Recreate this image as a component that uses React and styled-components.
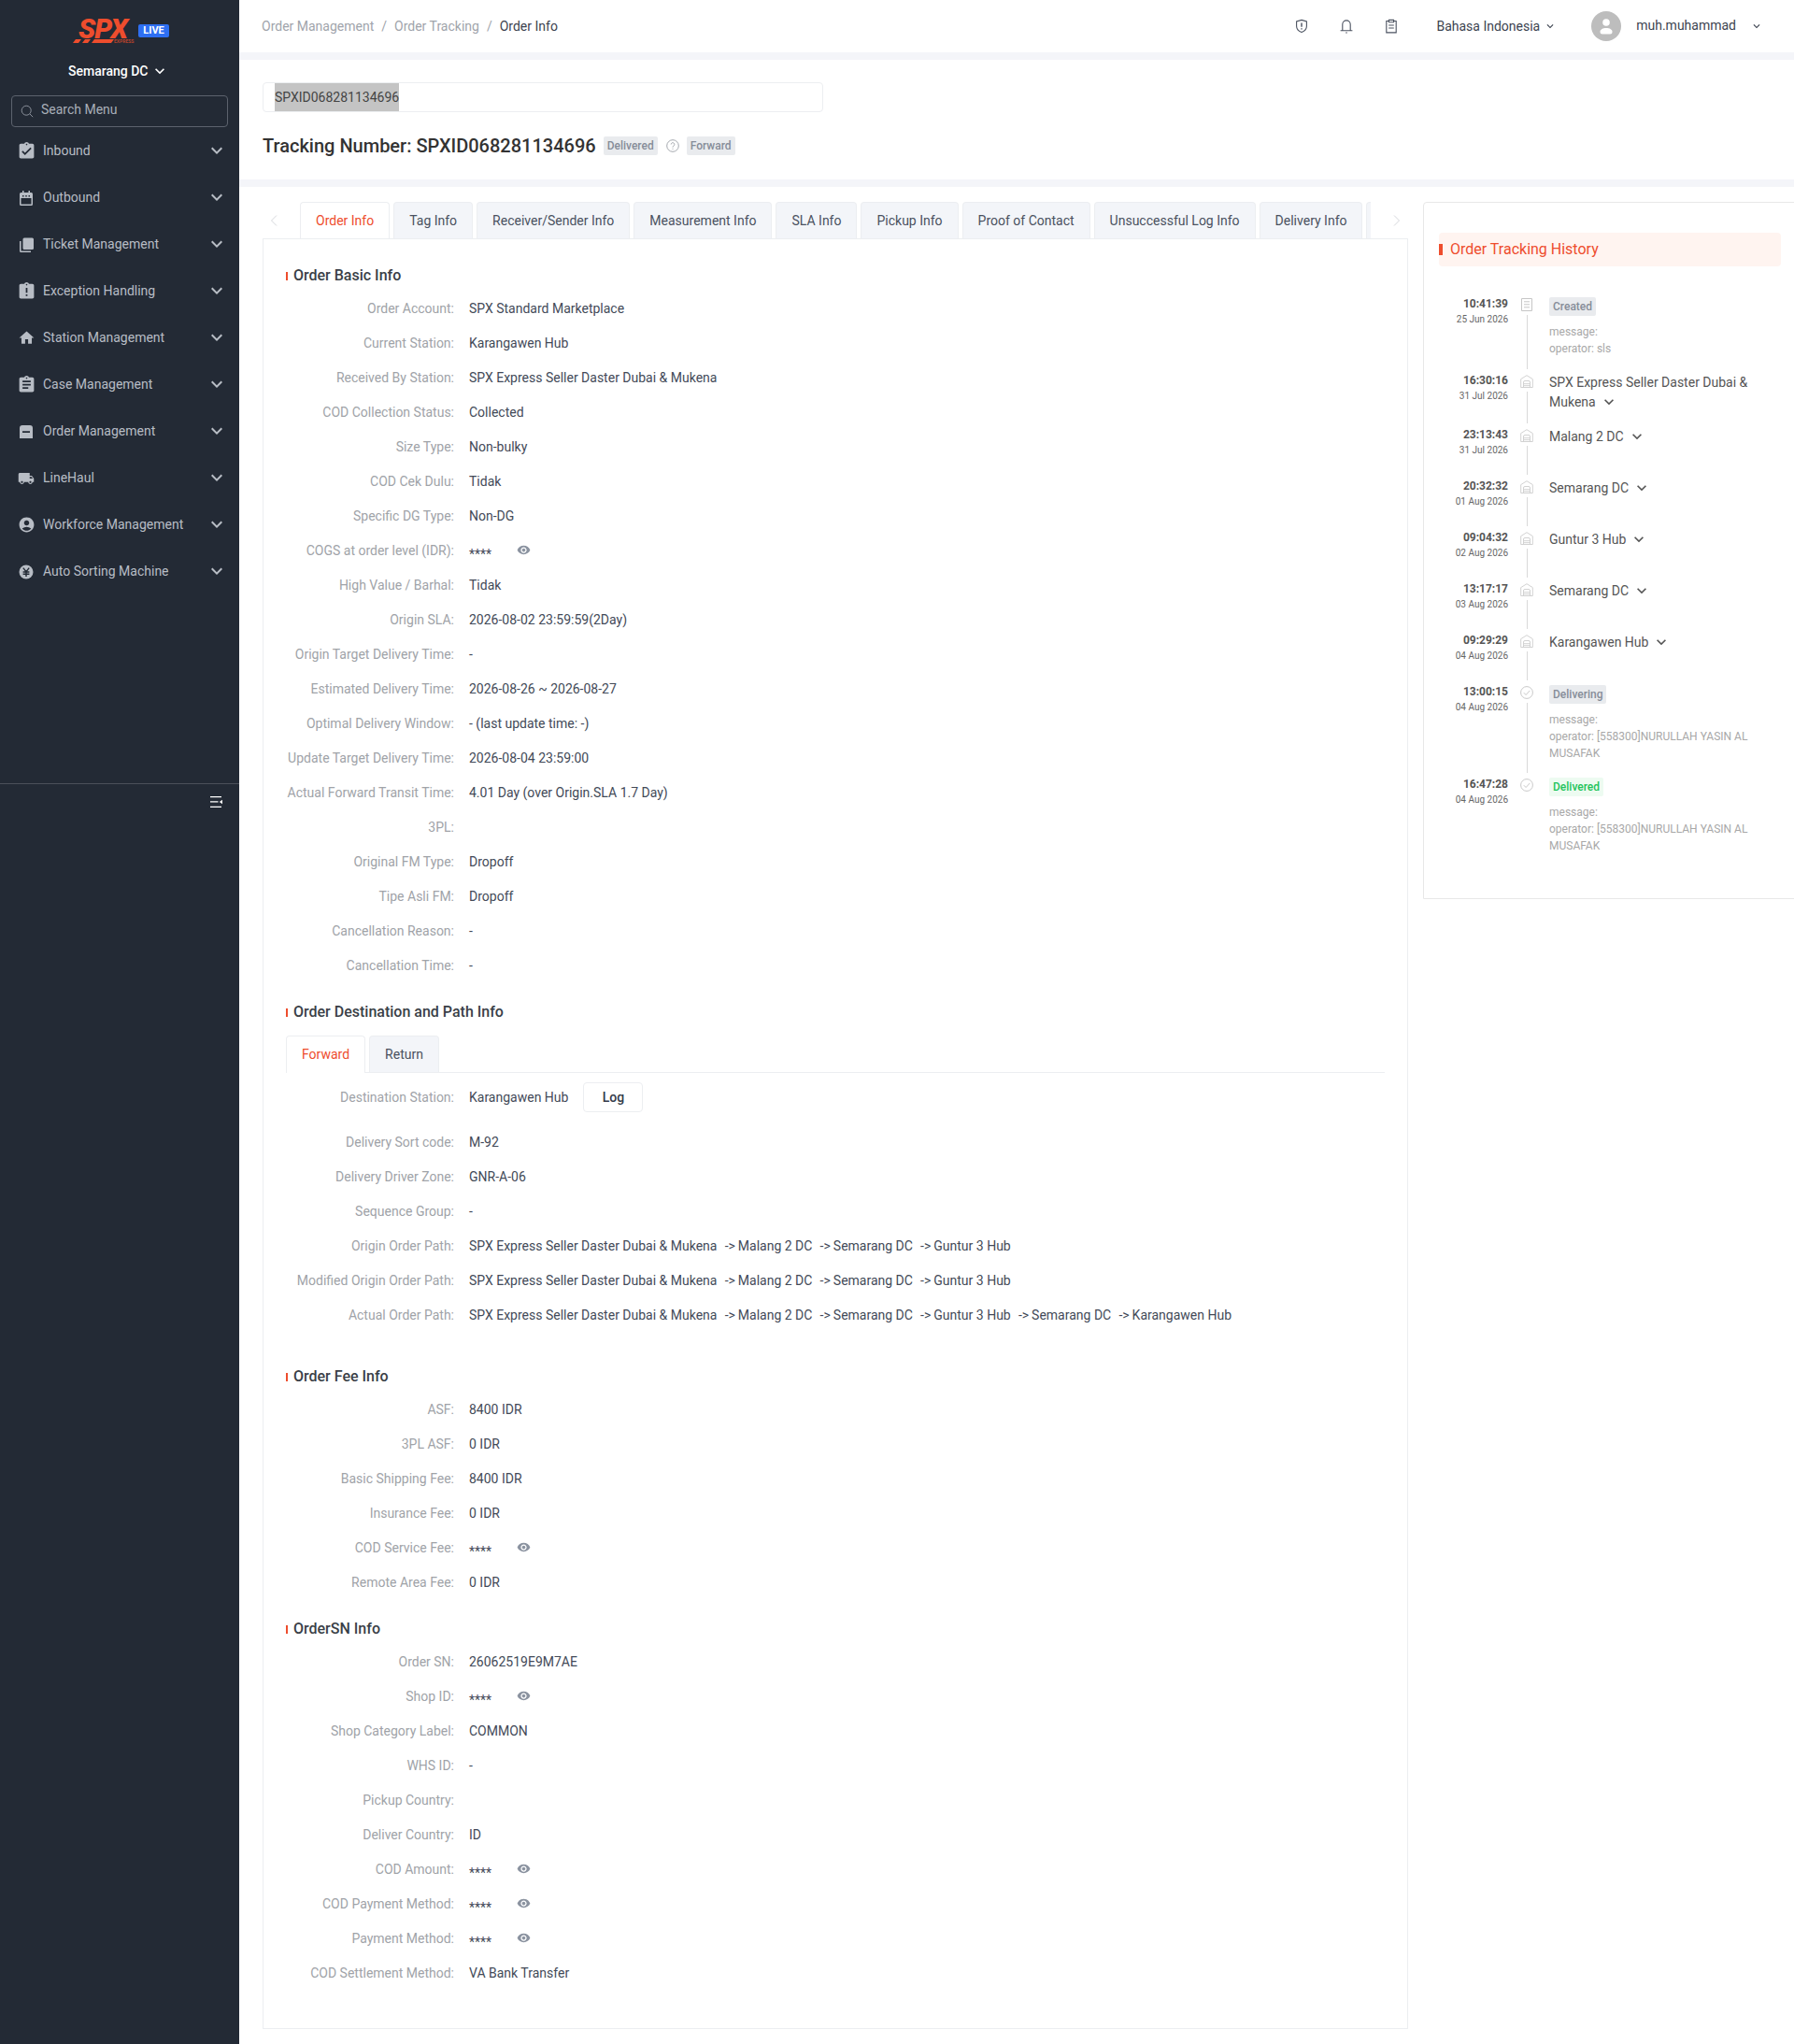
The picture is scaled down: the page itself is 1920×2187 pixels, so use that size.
import React from 'react';
import styled, { createGlobalStyle } from 'styled-components';
import {
  MdAssignmentTurnedIn,
  MdAssignmentLate,
  MdHome,
  MdAssignment,
  MdLocalShipping,
  MdAccountCircle,
  MdVisibility,
  MdKeyboardArrowDown,
} from 'react-icons/md';

const GlobalStyle = createGlobalStyle`
  html, body {
    margin: 0;
    padding: 0;
    background: #fff;
    font-family: Roboto, "Liberation Sans", sans-serif;
    overflow: hidden;
  }
  * { box-sizing: border-box; }
`;

const Shell = styled.div`
  display: flex;
  width: 1920px;
  height: 2187px;
  overflow: hidden;
`;

/* ---------- sidebar ---------- */
const Sidebar = styled.aside`
  width: 256px;
  flex-shrink: 0;
  background: #232a35;
  display: flex;
  flex-direction: column;
`;
const LogoRow = styled.div`
  height: 62px;
  padding: 18px 0 0 78px;
  display: flex;
  align-items: flex-start;
  gap: 2px;
  svg { overflow: visible; }
`;
const LiveBadge = styled.span`
  margin-top: 8px;
  width: 33px;
  height: 14px;
  border-radius: 2px;
  background: #2e6ff2;
  color: #fff;
  font-size: 11px;
  font-weight: 700;
  line-height: 14px;
  text-align: center;
`;
const StationPicker = styled.div`
  height: 28px;
  margin-bottom: 12px;
  padding-left: 73px;
  display: flex;
  align-items: center;
  gap: 3px;
  color: #fff;
  font-size: 14px;
  font-weight: 500;
  svg { color: #b7bcc4; }
`;
const SearchBox = styled.div`
  margin: 0 12px;
  height: 34px;
  border: 1px solid #5c626d;
  border-radius: 4px;
  padding: 0 0 5px 9px;
  display: flex;
  align-items: center;
  gap: 8px;
  color: #a9afb9;
  font-size: 14px;
  flex-shrink: 0;
  svg { margin-top: 5px; }
`;
const Menu = styled.nav`
  height: 702px;
`;
const MenuRow = styled.div`
  height: 50px;
  padding: 0 12px 0 14px;
  display: flex;
  align-items: center;
  color: #b8bdc5;
  font-size: 14px;
`;
const MenuIcon = styled.span`
  width: 28px;
  height: 24px;
  margin-top: 1px;
  flex-shrink: 0;
  display: flex;
  align-items: center;
  justify-content: center;
`;
const MenuLabel = styled.span`
  flex: 1;
  margin-left: 4px;
`;
const SideFooter = styled.div`
  border-top: 1px solid #4b505a;
  height: 38px;
  padding: 13px 18px 0 0;
  display: flex;
  justify-content: flex-end;
`;

/* ---------- main ---------- */
const Main = styled.main`
  flex: 1;
  min-width: 0;
  overflow: hidden;
  display: flex;
  flex-direction: column;
`;
const TopBar = styled.header`
  height: 56px;
  flex-shrink: 0;
  padding-left: 24px;
  display: flex;
  align-items: center;
  font-size: 14px;
`;
const Crumbs = styled.div`
  flex: 1;
  display: flex;
  gap: 8px;
  color: #a0a4ab;
`;
const CrumbNow = styled.span`
  color: #3c4350;
`;
const IconSlot = styled.span`
  width: 16px;
  height: 16px;
  display: flex;
  margin-right: ${(p) => p.$gap}px;
  color: #4b5260;
`;
const Lang = styled.div`
  display: flex;
  align-items: center;
  gap: 4px;
  color: #3c4350;
  margin-right: 37px;
`;
const Avatar = styled.span`
  width: 32px;
  height: 32px;
  border-radius: 50%;
  background: #bdbdbd;
  margin-right: 16px;
  display: flex;
  align-items: center;
  justify-content: center;
`;
const UserName = styled.span`
  color: #3c4350;
  margin-top: -2px;
  margin-right: 15px;
`;
const UserCaret = styled.span`
  display: flex;
  margin-right: 33px;
`;
const Strip = styled.div`
  height: 8px;
  flex-shrink: 0;
  background: #f4f5f9;
`;
const SearchSection = styled.section`
  height: 128px;
  flex-shrink: 0;
  padding: 24px 25px 0;
`;
const TrackingInput = styled.div`
  width: 600px;
  height: 32px;
  border: 1px solid #eceef1;
  border-radius: 4px;
  padding: 0 12px;
  display: flex;
  align-items: center;
  font-size: 14px;
  color: #444;
`;
const Selected = styled.span`
  background: #c4c4c4;
  line-height: 30px;
`;
const TitleRow = styled.div`
  margin-top: 24px;
  height: 24px;
  display: flex;
  align-items: center;
`;
const Title = styled.h1`
  margin: 0 8px 0 0;
  font-size: 20px;
  line-height: 24px;
  font-weight: 500;
  color: #333;
`;
const Badge = styled.span`
  height: 20px;
  padding: 0 4px;
  border-radius: 2px;
  display: inline-flex;
  align-items: center;
  font-size: 12px;
  font-weight: 500;
  background: ${(p) => (p.$done ? '#edfbf1' : '#e9ebee')};
  color: ${(p) => (p.$done ? '#1fc45c' : '#868d99')};
`;
const HelpIcon = styled.span`
  display: flex;
  margin: 0 8px 0 9px;
`;
const Content = styled.div`
  flex: 1;
  padding: 16px 0 0 25px;
  display: flex;
  gap: 16px;
  align-items: flex-start;
`;
const LeftColumn = styled.div`
  width: 1226px;
  flex-shrink: 0;
`;
const TabNav = styled.div`
  height: 39px;
  display: flex;
  align-items: stretch;
  position: relative;
`;
const TabArrow = styled.span`
  width: 40px;
  padding: 0 8px;
  flex-shrink: 0;
  display: flex;
  align-items: center;
  justify-content: ${(p) => (p.$end ? 'flex-end' : 'flex-start')};
  color: #d5d7db;
`;
const TabScroller = styled.div`
  flex: 1;
  min-width: 0;
  display: flex;
  gap: 4px;
  overflow: hidden;
`;
const Tab = styled.div`
  flex-shrink: 0;
  height: ${(p) => (p.$active ? '40px' : '39px')};
  min-width: 32px;
  padding: 0 16px ${(p) => (p.$active ? '1px' : '0')};
  display: flex;
  align-items: center;
  font-size: 14px;
  border: 1px solid #eceef1;
  border-bottom: 0;
  border-radius: 4px 4px 0 0;
  position: relative;
  z-index: ${(p) => (p.$active ? 1 : 0)};
  background: ${(p) => (p.$active ? '#fff' : '#f3f5f9')};
  color: ${(p) => (p.$active ? '#ee4d2d' : '#4a5160')};
`;
const Panel = styled.div`
  height: 1916px;
  border: 1px solid #eceef1;
  padding: 28px 24px 0;
`;
const SectionTitle = styled.h2`
  margin: ${(p) => p.$top || 0}px 0 14px;
  height: 22px;
  display: flex;
  align-items: center;
  gap: 6px;
  font-size: 16px;
  line-height: 22px;
  font-weight: 500;
  color: #3a3f47;
  &::before {
    content: '';
    width: 2px;
    height: 9px;
    background: #ee4d2d;
  }
`;
const Row = styled.div`
  display: flex;
  height: 37px;
  align-items: flex-start;
  font-size: 14px;
  line-height: 21px;
`;
const Label = styled.span`
  width: 180px;
  flex-shrink: 0;
  text-align: right;
  color: #a0a3a8;
  white-space: nowrap;
`;
const Value = styled.span`
  margin-left: 16px;
  color: #434a58;
  white-space: pre;
`;
const MaskValue = styled(Value)`
  margin-top: 4px;
`;
const Hop = styled.span`
  display: inline-block;
  width: 22.4px;
  padding-right: 3px;
  text-align: right;
`;
const EyeWrap = styled.span`
  display: flex;
  margin-left: 27px;
  margin-top: 2px;
  color: #8b93a0;
`;
const SubTabs = styled.div`
  height: 40px;
  display: flex;
  gap: 4px;
  border-bottom: 1px solid #eceef1;
  margin-bottom: 10px;
  width: 1176px;
`;
const LogRow = styled(Row)`
  height: 32px;
  margin-bottom: 22px;
  align-items: center;
`;
const LogButton = styled.span`
  margin-left: 16px;
  width: 64px;
  height: 32px;
  border: 1px solid #eceef1;
  border-radius: 4px;
  display: flex;
  align-items: center;
  justify-content: center;
  color: #333a49;
  font-weight: 500;
`;

/* ---------- tracking history ---------- */
const HistoryCard = styled.aside`
  width: 420px;
  flex-shrink: 0;
  height: 746px;
  border: 1px solid #e8e8e8;
  border-radius: 4px 0 0 0;
  padding: 32px 0 0 16px;
`;
const HistoryHead = styled.div`
  width: 366px;
  height: 36px;
  padding-bottom: 2px;
  border-radius: 4px;
  background: #fff4f0;
  display: flex;
  align-items: center;
  gap: 8px;
  color: #ee4d2d;
  font-size: 16px;
  margin-bottom: 33px;
  &::before {
    content: '';
    width: 4px;
    height: 12px;
    margin-top: 2px;
    background: #ee4d2d;
  }
`;
const Step = styled.div`
  display: flex;
  height: ${(p) => p.$h}px;
  width: 366px;
`;
const StepTime = styled.div`
  width: 74px;
  flex-shrink: 0;
  text-align: right;
`;
const Clock = styled.div`
  font-size: 12px;
  font-weight: 700;
  line-height: 14px;
  color: #555;
`;
const DateText = styled.div`
  margin-top: 3px;
  font-size: 10px;
  line-height: 14px;
  color: #666;
  white-space: nowrap;
`;
const Rail = styled.div`
  width: 40px;
  flex-shrink: 0;
  display: flex;
  flex-direction: column;
  align-items: center;
  padding: 1px 0 5px;
  svg { flex-shrink: 0; }
`;
const RailLine = styled.span`
  flex: 1;
  width: 1px;
  margin-top: 4px;
  background: #d9d9d9;
`;
const StepBody = styled.div`
  flex: 1;
  min-width: 0;
  margin-top: -1px;
  padding: 0 16px 0 4px;
`;
const StationName = styled.div`
  font-size: 14px;
  line-height: 21px;
  color: #555;
  svg { vertical-align: -5px; margin-left: 4px; color: #3c4350; }
`;
const StepNote = styled.div`
  margin-top: 8px;
  font-size: 12px;
  line-height: 18px;
  color: #a8a8a8;
`;

const Chevron = ({ size = 18, color = 'currentColor' }) => <MdKeyboardArrowDown size={size} color={color} />;

const CalendarIcon = () => (
  <svg width="16" height="16" viewBox="0 0 16 16" fill="#b8bdc5" fillRule="evenodd">
    <path d="M4 0h1.500v2h5V0H12v2h1.500A1.500 1.500 0 0 1 15 3.500v11a1.500 1.500 0 0 1-1.500 1.500h-11A1.500 1.500 0 0 1 1 14.500v-11A1.500 1.500 0 0 1 2.500 2H4zM2.500 8v6.500h11V8zM4 5v1.500h1.500V5zM7.250 5v1.500h1.500V5zM10.500 5v1.500H12V5z" />
  </svg>
);
const StackIcon = () => (
  <svg width="16" height="16" viewBox="0 0 16 16" fill="#b8bdc5">
    <path d="M6 .5h8.500A1.500 1.500 0 0 1 16 2v9.500a1.500 1.500 0 0 1-1.500 1.500H6a1.500 1.500 0 0 1-1.500-1.500V2A1.500 1.500 0 0 1 6 .5z" />
    <path d="M1 4h1.500v10.500H13V16H2.500A1.500 1.500 0 0 1 1 14.500z" />
  </svg>
);
const OrderIcon = () => (
  <svg width="16" height="16" viewBox="0 0 16 16" fill="#b8bdc5" fillRule="evenodd">
    <path d="M4 1h8a3 3 0 0 1 3 3v11H1V4a3 3 0 0 1 3-3zM4 7.200V9h8V7.200z" />
  </svg>
);
const YenIcon = () => (
  <svg width="16" height="16" viewBox="0 0 16 16">
    <circle cx="8" cy="8" r="7.500" fill="#b8bdc5" />
    <path d="M4.800 3.600 8 7.600l3.200-4M4.600 8h6.800M4.600 10.200h6.800M8 7.600V13" stroke="#232a35" strokeWidth="1.400" fill="none" />
  </svg>
);
const CollapseIcon = () => (
  <svg width="13" height="12" viewBox="0 0 13 12" fill="#fff">
    <path d="M0 0h12v1.300H0zM0 5.300h8.500v1.300H0zM0 10.700h12V12H0zM13 3.800v4.400L9.800 6z" />
  </svg>
);
const SearchIcon = () => (
  <svg width="14" height="14" viewBox="0 0 14 14" fill="none" stroke="#8a909a" strokeWidth="1">
    <circle cx="6.200" cy="6.200" r="5" />
    <path d="m10 10 3.200 3.200" />
  </svg>
);
const ShieldIcon = () => (
  <svg width="16" height="16" viewBox="0 0 16 16" fill="none" stroke="currentColor" strokeWidth="1.100">
    <path d="M8 1.400 13.400 3v5c0 3.200-2.400 5.400-5.400 6.600C5 13.400 2.600 11.200 2.600 8V3z" />
    <path d="M8 4.600v4.200M8 10.200v1.200" strokeWidth="1.400" />
  </svg>
);
const BellIcon = () => (
  <svg width="16" height="16" viewBox="0 0 16 16" fill="none" stroke="currentColor" strokeWidth="1.100">
    <path d="M3.800 12.800V6.100a4.200 4.200 0 0 1 8.400 0v6.700M1.600 12.800h12.800" />
    <path d="M7.200 15h1.600" strokeWidth="1.200" />
  </svg>
);
const ClipIcon = () => (
  <svg width="16" height="16" viewBox="0 0 16 16" fill="none" stroke="currentColor" strokeWidth="1.100">
    <path d="M5.400 2.500H2.800v12.400h10.400V2.500h-2.600" />
    <path d="M5.400 1.400h5.200v2.400H5.400zM5.200 7h5.600M5.200 10h5.600" />
  </svg>
);
const PersonIcon = () => (
  <svg width="14" height="18" viewBox="0 0 14 18" fill="#fff">
    <circle cx="7" cy="5" r="3.800" />
    <path d="M3 17.500a2.500 2.500 0 0 1-2.500-2.500c0-2.500 3-4 6.500-4s6.500 1.500 6.500 4a2.500 2.500 0 0 1-2.500 2.500z" />
  </svg>
);
const HelpGlyph = () => (
  <svg width="14" height="14" viewBox="0 0 14 14" fill="none" stroke="#9b9fa6" strokeWidth="0.900">
    <circle cx="7" cy="7" r="6.300" />
    <path d="M5.200 5.500a1.800 1.800 0 1 1 2.800 1.500c-.7.400-1 .8-1 1.600M7 9.800v1" />
  </svg>
);
const ArrowLeft = () => (
  <svg width="8" height="12" viewBox="0 0 8 12" fill="none" stroke="currentColor"><path d="M7 .5 1.500 6 7 11.500" /></svg>
);
const ArrowRight = () => (
  <svg width="8" height="12" viewBox="0 0 8 12" fill="none" stroke="currentColor"><path d="M1 .5 6.500 6 1 11.500" /></svg>
);
const DocStep = () => (
  <svg width="14" height="14" viewBox="0 0 14 14" fill="none" stroke="#c6c6c6" strokeWidth="1">
    <path d="M1.500.5h11v13h-11zM4 3.800h6M4 6.800h6M4 9.800h6" />
  </svg>
);
const HubStep = () => (
  <svg width="14" height="14" viewBox="0 0 14 14" fill="none" stroke="#d2d2d2" strokeWidth="1">
    <path d="M.7 13.500V4.600L7 .7l6.300 3.900v8.900z" />
    <path d="M3.500 13.500V8A1.500 1.500 0 0 1 5 6.500h4A1.500 1.500 0 0 1 10.500 8v5.500M3.500 9.700h7M3.500 11.700h7" />
  </svg>
);
const CheckStep = () => (
  <svg width="14" height="14" viewBox="0 0 14 14" fill="none" stroke="#c9c9c9" strokeWidth="1">
    <circle cx="7" cy="7" r="6.400" />
    <path d="m3.800 7.200 2.300 2.300 4.200-4.600" />
  </svg>
);

const MENU = [
  ['Inbound', <MdAssignmentTurnedIn size={21} />],
  ['Outbound', <CalendarIcon />],
  ['Ticket Management', <StackIcon />],
  ['Exception Handling', <MdAssignmentLate size={21} />],
  ['Station Management', <MdHome size={19} />],
  ['Case Management', <MdAssignment size={21} />],
  ['Order Management', <OrderIcon />],
  ['LineHaul', <MdLocalShipping size={18} />],
  ['Workforce Management', <MdAccountCircle size={19} />],
  ['Auto Sorting Machine', <YenIcon />],
];

const TABS = [
  'Order Info', 'Tag Info', 'Receiver/Sender Info', 'Measurement Info', 'SLA Info',
  'Pickup Info', 'Proof of Contact', 'Unsuccessful Log Info', 'Delivery Info', '',
];

const MASK = '****';

const BASIC = [
  ['Order Account', 'SPX Standard Marketplace'],
  ['Current Station', 'Karangawen Hub'],
  ['Received By Station', 'SPX Express Seller Daster Dubai & Mukena'],
  ['COD Collection Status', 'Collected'],
  ['Size Type', 'Non-bulky'],
  ['COD Cek Dulu', 'Tidak'],
  ['Specific DG Type', 'Non-DG'],
  ['COGS at order level (IDR)', MASK],
  ['High Value / Barhal', 'Tidak'],
  ['Origin SLA', '2026-08-02 23:59:59(2Day)'],
  ['Origin Target Delivery Time', '-'],
  ['Estimated Delivery Time', '2026-08-26 ~ 2026-08-27'],
  ['Optimal Delivery Window', '- (last update time: -)'],
  ['Update Target Delivery Time', '2026-08-04 23:59:00'],
  ['Actual Forward Transit Time', '4.01 Day (over Origin.SLA 1.7 Day)'],
  ['3PL', ''],
  ['Original FM Type', 'Dropoff'],
  ['Tipe Asli FM', 'Dropoff'],
  ['Cancellation Reason', '-'],
  ['Cancellation Time', '-'],
];

const HOPS = ['SPX Express Seller Daster Dubai & Mukena', 'Malang 2 DC', 'Semarang DC', 'Guntur 3 Hub'];

const DESTINATION = [
  ['Delivery Sort code', 'M-92'],
  ['Delivery Driver Zone', 'GNR-A-06'],
  ['Sequence Group', '-'],
  ['Origin Order Path', HOPS],
  ['Modified Origin Order Path', HOPS],
  ['Actual Order Path', [...HOPS, 'Semarang DC', 'Karangawen Hub']],
];

const FEES = [
  ['ASF', '8400 IDR'],
  ['3PL ASF', '0 IDR'],
  ['Basic Shipping Fee', '8400 IDR'],
  ['Insurance Fee', '0 IDR'],
  ['COD Service Fee', MASK],
  ['Remote Area Fee', '0 IDR'],
];

const ORDER_SN = [
  ['Order SN', '26062519E9M7AE'],
  ['Shop ID', MASK],
  ['Shop Category Label', 'COMMON'],
  ['WHS ID', '-'],
  ['Pickup Country', ''],
  ['Deliver Country', 'ID'],
  ['COD Amount', MASK],
  ['COD Payment Method', MASK],
  ['Payment Method', MASK],
  ['COD Settlement Method', 'VA Bank Transfer'],
];

const OPERATOR = '[558300]NURULLAH YASIN AL MUSAFAK';

const STEPS = [
  { h: 81.5, time: '10:41:39', date: '25 Jun 2026', icon: <DocStep />, badge: 'Created', operator: 'sls' },
  { h: 58, time: '16:30:16', date: '31 Jul 2026', icon: <HubStep />, station: 'SPX Express Seller Daster Dubai & Mukena' },
  { h: 55, time: '23:13:43', date: '31 Jul 2026', icon: <HubStep />, station: 'Malang 2 DC' },
  { h: 55, time: '20:32:32', date: '01 Aug 2026', icon: <HubStep />, station: 'Semarang DC' },
  { h: 55, time: '09:04:32', date: '02 Aug 2026', icon: <HubStep />, station: 'Guntur 3 Hub' },
  { h: 55, time: '13:17:17', date: '03 Aug 2026', icon: <HubStep />, station: 'Semarang DC' },
  { h: 55, time: '09:29:29', date: '04 Aug 2026', icon: <HubStep />, station: 'Karangawen Hub' },
  { h: 99, time: '13:00:15', date: '04 Aug 2026', icon: <CheckStep />, badge: 'Delivering', operator: OPERATOR },
  { h: 99, time: '16:47:28', date: '04 Aug 2026', icon: <CheckStep />, badge: 'Delivered', done: true, operator: OPERATOR, last: true },
];

const InfoRows = ({ rows }) =>
  rows.map(([label, value]) => (
    <Row key={label}>
      <Label>{label}:</Label>
      {value === MASK ? (
        <>
          <MaskValue>{value}</MaskValue>
          <EyeWrap>
            <MdVisibility size={15} />
          </EyeWrap>
        </>
      ) : (
        <Value>
          {Array.isArray(value)
            ? value.map((hop, i) => (
                <React.Fragment key={i}>
                  {i > 0 && <Hop>-&gt;</Hop>}
                  {hop}
                </React.Fragment>
              ))
            : value}
        </Value>
      )}
    </Row>
  ));

const App = () => (
  <Shell>
    <GlobalStyle />
    <Sidebar>
      <LogoRow>
        <svg width="68" height="30" viewBox="0 0 68 30">
          <text x="6" y="23" fontFamily="Roboto, sans-serif" fontSize="30" fontWeight="900" fontStyle="italic" fill="#ee4d2d" letterSpacing="-1">SPX</text>
          <path d="M0 28l3-4h6l-3 4zM10 28l3-4h6l-3 4zM20 28l3-4h21l-3 4z" fill="#ee4d2d" />
          <text x="44" y="28" fontFamily="Roboto, sans-serif" fontSize="5" fontWeight="700" fill="#b8432c">EXPRESS</text>
        </svg>
        <LiveBadge>LIVE</LiveBadge>
      </LogoRow>
      <StationPicker>
        Semarang DC
        <Chevron size={20} />
      </StationPicker>
      <SearchBox>
        <SearchIcon />
        <span>Search Menu</span>
      </SearchBox>
      <Menu>
        {MENU.map(([label, icon]) => (
          <MenuRow key={label}>
            <MenuIcon>{icon}</MenuIcon>
            <MenuLabel>{label}</MenuLabel>
            <Chevron size={24} color="#b8bdc5" />
          </MenuRow>
        ))}
      </Menu>
      <SideFooter>
        <CollapseIcon />
      </SideFooter>
    </Sidebar>

    <Main>
      <TopBar>
        <Crumbs>
          <span>Order Management</span>
          <span>/</span>
          <span>Order Tracking</span>
          <span>/</span>
          <CrumbNow>Order Info</CrumbNow>
        </Crumbs>
        <IconSlot $gap={32}><ShieldIcon /></IconSlot>
        <IconSlot $gap={32}><BellIcon /></IconSlot>
        <IconSlot $gap={40}><ClipIcon /></IconSlot>
        <Lang>
          Bahasa Indonesia
          <Chevron size={14} />
        </Lang>
        <Avatar><PersonIcon /></Avatar>
        <UserName>muh.muhammad</UserName>
        <UserCaret><Chevron size={14} color="#3c4350" /></UserCaret>
      </TopBar>
      <Strip />
      <SearchSection>
        <TrackingInput>
          <Selected>SPXID068281134696</Selected>
        </TrackingInput>
        <TitleRow>
          <Title>Tracking Number: SPXID068281134696</Title>
          <Badge>Delivered</Badge>
          <HelpIcon><HelpGlyph /></HelpIcon>
          <Badge>Forward</Badge>
        </TitleRow>
      </SearchSection>
      <Strip />
      <Content>
        <LeftColumn>
          <TabNav>
            <TabArrow><ArrowLeft /></TabArrow>
            <TabScroller>
              {TABS.map((tab, i) => (
                <Tab key={i} $active={i === 0}>{tab}</Tab>
              ))}
            </TabScroller>
            <TabArrow $end><ArrowRight /></TabArrow>
          </TabNav>
          <Panel>
            <SectionTitle>Order Basic Info</SectionTitle>
            <InfoRows rows={BASIC} />

            <SectionTitle $top={12}>Order Destination and Path Info</SectionTitle>
            <SubTabs>
              <Tab $active>Forward</Tab>
              <Tab>Return</Tab>
            </SubTabs>
            <LogRow>
              <Label>Destination Station:</Label>
              <Value>Karangawen Hub</Value>
              <LogButton>Log</LogButton>
            </LogRow>
            <InfoRows rows={DESTINATION} />

            <SectionTitle $top={28}>Order Fee Info</SectionTitle>
            <InfoRows rows={FEES} />

            <SectionTitle $top={12}>OrderSN Info</SectionTitle>
            <InfoRows rows={ORDER_SN} />
          </Panel>
        </LeftColumn>

        <HistoryCard>
          <HistoryHead>Order Tracking History</HistoryHead>
          {STEPS.map((step) => (
            <Step key={step.time} $h={step.h}>
              <StepTime>
                <Clock>{step.time}</Clock>
                <DateText>{step.date}</DateText>
              </StepTime>
              <Rail>
                {step.icon}
                {!step.last && <RailLine />}
              </Rail>
              <StepBody>
                {step.badge ? (
                  <>
                    <Badge $done={step.done}>{step.badge}</Badge>
                    <StepNote>
                      message:
                      <br />
                      {`operator: ${step.operator}`}
                    </StepNote>
                  </>
                ) : (
                  <StationName>
                    {step.station}
                    <Chevron size={20} />
                  </StationName>
                )}
              </StepBody>
            </Step>
          ))}
        </HistoryCard>
      </Content>
    </Main>
  </Shell>
);

export default App;
